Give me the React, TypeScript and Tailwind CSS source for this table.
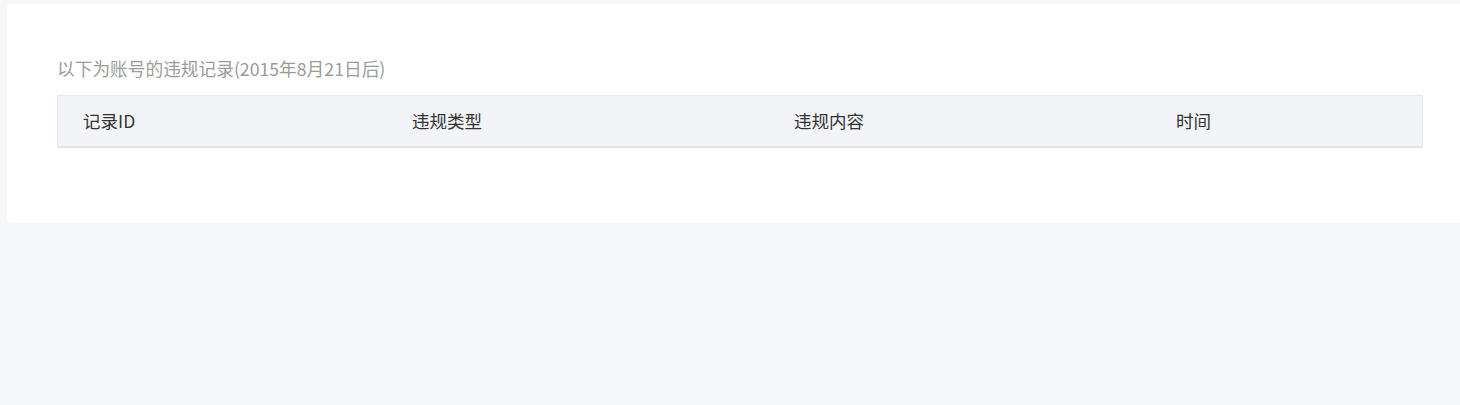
import React from "react";

const columns = [
  { label: "记录ID", width: "w-[329px]" },
  { label: "违规类型", width: "w-[382px]" },
  { label: "违规内容", width: "w-[382px]" },
  { label: "时间", width: "flex-1" },
];

export default function App() {
  return (
    <div
      className="min-h-[405px] w-full overflow-hidden bg-[#f6f7f9] pt-[4px] pl-[7px]"
      style={{ fontFamily: '"Noto Sans CJK SC", "Noto Sans", sans-serif' }}
    >
      <div className="h-[219px] rounded-l-[4px] bg-white pl-[50px] pr-[37px] pt-[52px]">
        {/* subtitle */}
        <p className="text-[17.7px] leading-6 text-[#9b9b9b]">
          以下为账号的违规记录(2015年8月21日后)
        </p>

        {/* table header */}
        <div className="mt-[15px] flex h-[53px] items-center border-t border-r border-l border-[#e6e7eb] border-b-2 border-b-[#e4e5ea] bg-[#f3f4f8]">
          {columns.map((col) => (
            <div
              key={col.label}
              className={`${col.width} pl-[25px] text-[17.5px] text-[#333333]`}
            >
              {col.label}
            </div>
          ))}
        </div>
      </div>
    </div>
  );
}
